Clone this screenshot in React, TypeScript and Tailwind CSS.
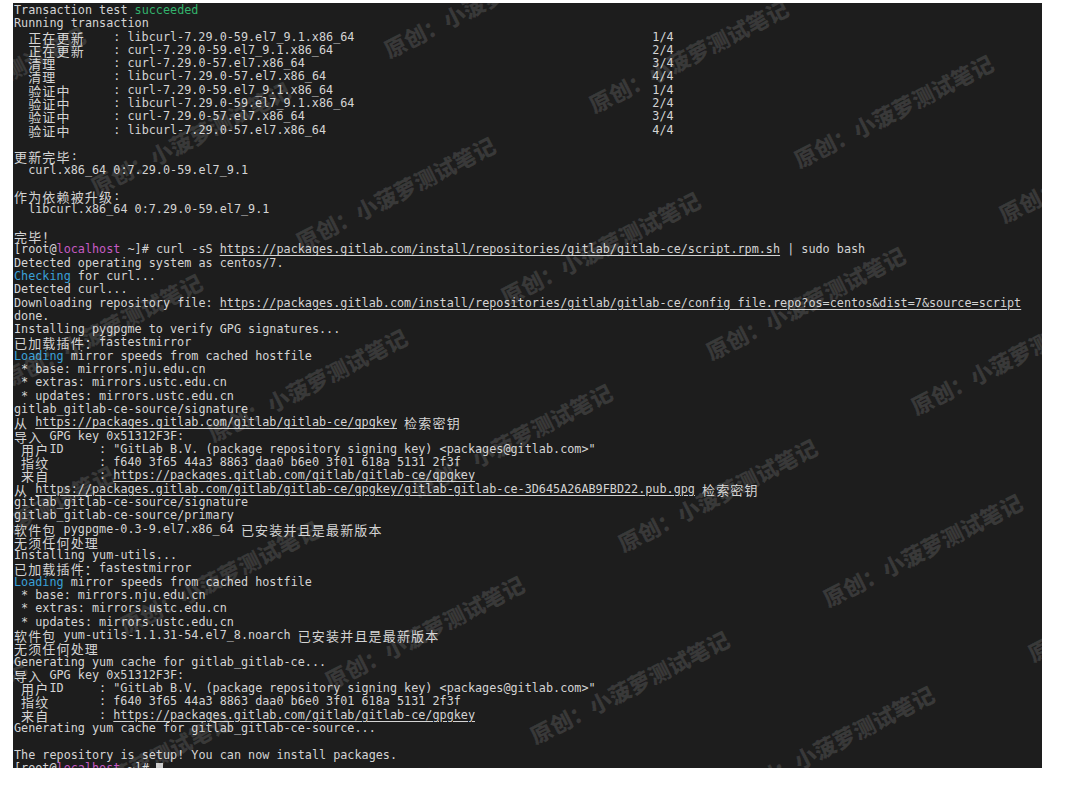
import React from "react";

type Seg = { t: string; c?: "green" | "cyan" | "pink"; u?: boolean };
type Line = string | Seg[];

const colorClass = {
  green: "text-[#33b26c]",
  cyan: "text-[#3aa0d8]",
  pink: "text-[#c65bc3]",
};

const isWide = (ch: string) => /[\u2E80-\u9FFF\uFF00-\uFF60\u3000-\u303F]/.test(ch);

const colWidth = (s: string) => {
  let n = 0;
  for (const ch of s) n += isWide(ch) ? 2 : 1;
  return n;
};

const pad = (s: string, col: number) => s + " ".repeat(Math.max(0, col - colWidth(s)));

const tx = (label: string, pkg: string, n: string) =>
  pad(pad("  " + label, 14) + ": " + pkg, 90) + n;

const mirrors: Line[] = [
  [{ t: "Loading", c: "cyan" }, { t: " mirror speeds from cached hostfile" }],
  " * base: mirrors.nju.edu.cn",
  " * extras: mirrors.ustc.edu.cn",
  " * updates: mirrors.ustc.edu.cn",
];

const keyInfo: Line[] = [
  "导入 GPG key 0x51312F3F:",
  ' 用户ID     : "GitLab B.V. (package repository signing key) <packages@gitlab.com>"',
  " 指纹       : f640 3f65 44a3 8863 daa0 b6e0 3f01 618a 5131 2f3f",
  [{ t: " 来自       : " }, { t: "https://packages.gitlab.com/gitlab/gitlab-ce/gpgkey", u: true }],
];

const prompt: Seg[] = [{ t: "[root@" }, { t: "localhost", c: "pink" }, { t: " ~]# " }];

const lines: Line[] = [
  [{ t: "Transaction test " }, { t: "succeeded", c: "green" }],
  "Running transaction",
  tx("正在更新", "libcurl-7.29.0-59.el7_9.1.x86_64", "1/4"),
  tx("正在更新", "curl-7.29.0-59.el7_9.1.x86_64", "2/4"),
  tx("清理", "curl-7.29.0-57.el7.x86_64", "3/4"),
  tx("清理", "libcurl-7.29.0-57.el7.x86_64", "4/4"),
  tx("验证中", "curl-7.29.0-59.el7_9.1.x86_64", "1/4"),
  tx("验证中", "libcurl-7.29.0-59.el7_9.1.x86_64", "2/4"),
  tx("验证中", "curl-7.29.0-57.el7.x86_64", "3/4"),
  tx("验证中", "libcurl-7.29.0-57.el7.x86_64", "4/4"),
  "",
  "更新完毕:",
  "  curl.x86_64 0:7.29.0-59.el7_9.1",
  "",
  "作为依赖被升级:",
  "  libcurl.x86_64 0:7.29.0-59.el7_9.1",
  "",
  "完毕！",
  [
    ...prompt,
    { t: "curl -sS " },
    { t: "https://packages.gitlab.com/install/repositories/gitlab/gitlab-ce/script.rpm.sh", u: true },
    { t: " | sudo bash" },
  ],
  "Detected operating system as centos/7.",
  [{ t: "Checking", c: "cyan" }, { t: " for curl..." }],
  "Detected curl...",
  [
    { t: "Downloading repository file: " },
    {
      t: "https://packages.gitlab.com/install/repositories/gitlab/gitlab-ce/config_file.repo?os=centos&dist=7&source=script",
      u: true,
    },
  ],
  "done.",
  "Installing pygpgme to verify GPG signatures...",
  "已加载插件：fastestmirror",
  ...mirrors,
  "gitlab_gitlab-ce-source/signature",
  [{ t: "从 " }, { t: "https://packages.gitlab.com/gitlab/gitlab-ce/gpgkey", u: true }, { t: " 检索密钥" }],
  ...keyInfo,
  [
    { t: "从 " },
    {
      t: "https://packages.gitlab.com/gitlab/gitlab-ce/gpgkey/gitlab-gitlab-ce-3D645A26AB9FBD22.pub.gpg",
      u: true,
    },
    { t: " 检索密钥" },
  ],
  "gitlab_gitlab-ce-source/signature",
  "gitlab_gitlab-ce-source/primary",
  "软件包 pygpgme-0.3-9.el7.x86_64 已安装并且是最新版本",
  "无须任何处理",
  "Installing yum-utils...",
  "已加载插件：fastestmirror",
  ...mirrors,
  "软件包 yum-utils-1.1.31-54.el7_8.noarch 已安装并且是最新版本",
  "无须任何处理",
  "Generating yum cache for gitlab_gitlab-ce...",
  ...keyInfo,
  "Generating yum cache for gitlab_gitlab-ce-source...",
  "",
  "The repository is setup! You can now install packages.",
];

// splits a run into plain text and double-width CJK cells
const renderText = (text: string, key: string) => {
  const out: React.ReactNode[] = [];
  let buf = "";
  let k = 0;
  for (const ch of text) {
    if (isWide(ch)) {
      if (buf) out.push(<span key={key + "-" + k++}>{buf}</span>);
      buf = "";
      out.push(
        <span
          key={key + "-" + k++}
          className="inline-block w-[14.18px] text-[13px] leading-[13.3px] align-top font-['Noto_Sans_CJK_SC',sans-serif]"
        >
          {ch}
        </span>
      );
    } else {
      buf += ch;
    }
  }
  if (buf) out.push(<span key={key + "-" + k++}>{buf}</span>);
  return out;
};

const TermLine: React.FC<{ line: Line }> = ({ line }) => {
  const segs: Seg[] = typeof line === "string" ? [{ t: line }] : line;
  return (
    <div className="h-[13.3px] whitespace-pre">
      {segs.map((s, i) => (
        <span
          key={i}
          className={`${s.c ? colorClass[s.c] : ""} ${s.u ? "underline underline-offset-2" : ""}`}
        >
          {renderText(s.t, String(i))}
        </span>
      ))}
    </div>
  );
};

const Watermarks: React.FC = () => {
  const marks: { x: number; y: number }[] = [];
  for (let j = -1; j <= 4; j++) {
    for (let i = -4; i <= 6; i++) {
      const x = 582 + 205 * i - 88 * j;
      const y = 112 + 55 * i + 192 * j;
      if (x + 200 > 0 && x < 1029 && y > 0 && y - 125 < 765) marks.push({ x, y });
    }
  }
  return (
    <>
      {marks.map((m, i) => (
        <span
          key={i}
          className="absolute whitespace-nowrap text-[22px] leading-[22px] font-black text-white/[0.12] origin-bottom-left -rotate-[27deg] pointer-events-none font-['Noto_Sans_CJK_SC',sans-serif]"
          style={{ left: m.x, top: m.y - 22 }}
        >
          原创：小菠萝测试笔记
        </span>
      ))}
    </>
  );
};

const App: React.FC = () => {
  return (
    <div className="w-[1090px] h-[792px] bg-white pt-[3px] pl-[13px]">
      <div className="relative w-[1029px] h-[765px] overflow-hidden bg-[#1d1d1d] pl-[1px] pt-[1px] text-[#d4d4d4] text-[11.79px] leading-[13.3px] font-['DejaVu_Sans_Mono',monospace]">
        {lines.map((l, i) => (
          <TermLine key={i} line={l} />
        ))}
        <div className="h-[13.3px] whitespace-pre">
          {prompt.map((s, i) => (
            <span key={i} className={s.c ? colorClass[s.c] : ""}>
              {s.t}
            </span>
          ))}
          <span className="inline-block w-[7px] h-[12px] bg-[#c8c8c8] align-top mt-[1px]" />
        </div>
        <Watermarks />
      </div>
    </div>
  );
};

export default App;
